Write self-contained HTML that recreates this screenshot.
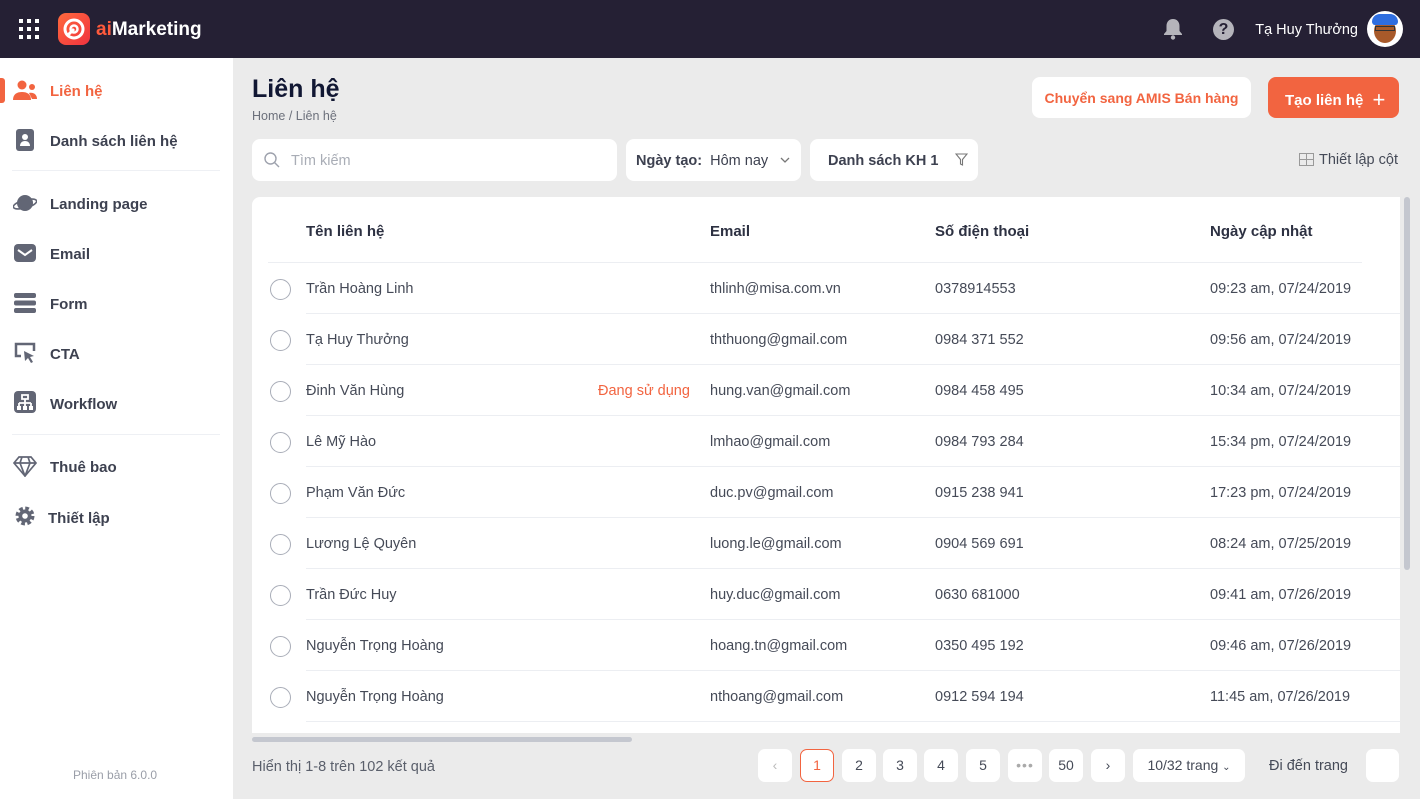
<!DOCTYPE html>
<html><head><meta charset="utf-8"><style>
*{box-sizing:border-box;margin:0;padding:0}
body{width:1420px;height:799px;overflow:hidden;background:#ebebeb;font-family:"Liberation Sans",sans-serif;color:#3a3f4b;position:relative}
.abs{position:absolute}
.hdr{left:0;top:0;width:1420px;height:58px;background:#252034}
.side{left:0;top:58px;width:233px;height:741px;background:#fff}
.nav{position:absolute;left:50px;font-size:15px;font-weight:bold;color:#3d4150}
.ic{position:absolute;left:13px;width:24px;height:22px}
.sep{position:absolute;left:12px;width:208px;height:1px;background:#eef0f4}
.btn{background:#fff;border-radius:8px}
.t{position:absolute;font-size:14.5px;color:#454a57;white-space:nowrap}
.th{position:absolute;top:223px;font-size:15px;font-weight:bold;color:#2d3142}
.rl{position:absolute;left:306px;width:1094px;height:1px;background:#eceef2}
.rad{position:absolute;left:270px;width:21px;height:21px;border:1.5px solid #a9adb8;border-radius:50%}
.pg{position:absolute;top:749px;width:34px;height:33px;background:#fff;border-radius:7px;font-size:14px;color:#454a57;text-align:center;line-height:33px}
</style></head><body>
<div class="abs hdr">
 <svg class="abs" style="left:19px;top:19px" width="20" height="20" viewBox="0 0 20 20" fill="#fff">
  <rect x="0" y="0" width="4" height="4"/><rect x="8" y="0" width="4" height="4"/><rect x="16" y="0" width="4" height="4"/>
  <rect x="0" y="8" width="4" height="4"/><rect x="8" y="8" width="4" height="4"/><rect x="16" y="8" width="4" height="4"/>
  <rect x="0" y="16" width="4" height="4"/><rect x="8" y="16" width="4" height="4"/><rect x="16" y="16" width="4" height="4"/></svg>
 <div class="abs" style="left:58px;top:13px;width:32px;height:32px;border-radius:8px;background:linear-gradient(135deg,#ff6a3d,#f0323f)">
  <svg width="32" height="32" viewBox="0 0 32 32"><circle cx="16" cy="16" r="9" fill="none" stroke="#fff" stroke-width="3"/><circle cx="16" cy="16" r="3.5" fill="none" stroke="#fff" stroke-width="2.5"/><path d="M9 23 L16 16" stroke="#fff" stroke-width="3"/></svg></div>
 <div class="abs" style="left:96px;top:19px;font-size:19px;font-weight:bold;color:#fff"><span style="color:#ff5a3c">ai</span>Marketing</div>
 <svg class="abs" style="left:1163px;top:18px" width="20" height="22" viewBox="0 0 20 22"><path d="M10 1c-4 0-6.5 3-6.5 7v5L1 16v1h18v-1l-2.5-3V8c0-4-2.5-7-6.5-7z" fill="#b5b4bb"/><circle cx="10" cy="19.5" r="2.2" fill="#b5b4bb"/></svg>
 <div class="abs" style="left:1213px;top:19px;width:21px;height:21px;border-radius:50%;background:#b5b4bb;color:#252034;font-weight:bold;font-size:16px;text-align:center;line-height:21px">?</div>
 <div class="abs" style="right:62px;top:22px;font-size:14.5px;color:#fff;white-space:nowrap">Tạ Huy Thưởng</div>
 <div class="abs" style="left:1367px;top:11px;width:36px;height:36px;border-radius:50%;background:#fff;overflow:hidden">
  <div class="abs" style="left:7px;top:8px;width:22px;height:24px;border-radius:50%;background:#a85a2a"></div>
  <div class="abs" style="left:5px;top:3px;width:26px;height:11px;border-radius:10px 10px 4px 4px;background:#2f6ee0"></div>
  <div class="abs" style="left:8px;top:15px;width:20px;height:5px;border:1.5px solid #333"></div></div>
</div>
<div class="abs side">
 <div class="abs" style="left:0;top:20px;width:5px;height:25px;background:#f26440;border-radius:0 3px 3px 0"></div>
 <svg class="ic" style="top:22px" viewBox="0 0 24 22" fill="#f26440"><circle cx="9" cy="5" r="4.5"/><path d="M0 20c0-6 4-8 9-8s9 2 9 8z"/><circle cx="19" cy="7" r="3"/><path d="M16 13c5-1 8 2 8 6h-5z"/></svg>
 <div class="nav" style="top:25px;color:#f26440">Liên hệ</div>
 <svg class="ic" style="top:71px" viewBox="0 0 24 22"><rect x="3" y="0" width="18" height="22" rx="3" fill="#626675"/><circle cx="12" cy="8" r="3" fill="#fff"/><path d="M7 17c0-3 2-5 5-5s5 2 5 5z" fill="#fff"/></svg>
 <div class="nav" style="top:75px">Danh sách liên hệ</div>
 <div class="sep" style="top:112px"></div>
 <svg class="ic" style="top:134px" viewBox="0 0 24 22"><circle cx="12" cy="11" r="8" fill="#626675"/><ellipse cx="12" cy="12" rx="12" ry="4" fill="none" stroke="#626675" stroke-width="1.6" transform="rotate(-15 12 12)"/></svg>
 <div class="nav" style="top:138px">Landing page</div>
 <svg class="ic" style="top:184px" viewBox="0 0 24 22"><rect x="1" y="2" width="22" height="18" rx="4" fill="#626675"/><path d="M5 8l7 5 7-5" fill="none" stroke="#fff" stroke-width="2"/></svg>
 <div class="nav" style="top:188px">Email</div>
 <svg class="ic" style="top:234px" viewBox="0 0 24 22" fill="#626675"><rect x="1" y="1" width="22" height="5" rx="2"/><rect x="1" y="8.5" width="22" height="5" rx="2"/><rect x="1" y="16" width="22" height="5" rx="2"/></svg>
 <div class="nav" style="top:238px">Form</div>
 <svg class="ic" style="top:284px" viewBox="0 0 24 22"><path d="M8 14H3V2h18v7" fill="none" stroke="#626675" stroke-width="2.5"/><path d="M11 9l10 5-4 1 3 5-2 1-3-5-3 3z" fill="#626675"/></svg>
 <div class="nav" style="top:288px">CTA</div>
 <svg class="ic" style="top:333px" viewBox="0 0 24 22"><rect x="1" y="0" width="22" height="22" rx="4" fill="#626675"/><path d="M9 4h6v4H9zM12 8v4M6 12h12M6 12v3M12 12v3M18 12v3" stroke="#fff" stroke-width="1.8" fill="none"/><rect x="4" y="15" width="4" height="4" fill="#fff"/><rect x="10" y="15" width="4" height="4" fill="#fff"/><rect x="16" y="15" width="4" height="4" fill="#fff"/></svg>
 <div class="nav" style="top:338px">Workflow</div>
 <div class="sep" style="top:376px"></div>
 <svg class="ic" style="top:397px" viewBox="0 0 24 22"><path d="M6 2h12l5 6-11 13L1 8z M1 8h22 M9 2l-2 6 5 13 5-13-2-6" fill="none" stroke="#626675" stroke-width="1.7"/></svg>
 <div class="nav" style="top:401px">Thuê bao</div>
 <svg class="ic" style="top:447px" viewBox="0 0 24 22"><circle cx="12" cy="11" r="7" fill="none" stroke="#626675" stroke-width="5" stroke-dasharray="3.3 2.2"/><circle cx="12" cy="11" r="6.5" fill="#626675"/><circle cx="12" cy="11" r="2.8" fill="#fff"/></svg>
 <div class="nav" style="top:452px;left:48px">Thiết lập</div>
 <div class="abs" style="left:73px;top:710px;font-size:12px;color:#9a9ea8">Phiên bản 6.0.0</div>
</div>

<div class="abs" style="left:252px;top:75px;font-size:25px;font-weight:bold;color:#111733">Liên hệ</div>
<div class="abs" style="left:252px;top:109px;font-size:12.5px;color:#6c707b">Home / Liên hệ</div>
<div class="abs btn" style="left:1032px;top:77px;width:219px;height:41px;font-size:14px;font-weight:bold;color:#f26440;text-align:center;line-height:42px;white-space:nowrap">Chuyển sang AMIS Bán hàng</div>
<div class="abs" style="left:1268px;top:77px;width:131px;height:41px;border-radius:8px;background:#f26440;color:#fff;font-size:15px;font-weight:bold;line-height:42px;padding-left:17px;white-space:nowrap">Tạo liên hệ <span style="font-size:22px;font-weight:normal;position:relative;top:2px;margin-left:5px">+</span></div>

<div class="abs btn" style="left:252px;top:139px;width:365px;height:42px"></div>
<svg class="abs" style="left:264px;top:152px" width="16" height="16" viewBox="0 0 16 16"><circle cx="6.5" cy="6.5" r="5.5" fill="none" stroke="#9ea2ad" stroke-width="1.4"/><path d="M10.5 10.5L15 15" stroke="#9ea2ad" stroke-width="1.4"/></svg>
<div class="abs" style="left:291px;top:153px;font-size:14.5px;color:#a9adb6">Tìm kiếm</div>
<div class="abs btn" style="left:626px;top:139px;width:175px;height:42px"></div>
<div class="abs" style="left:636px;top:153px;font-size:14.5px;color:#3d4150;white-space:nowrap"><b>Ngày tạo:</b>&nbsp; Hôm nay</div>
<svg class="abs" style="left:780px;top:157px" width="10" height="7" viewBox="0 0 10 7"><path d="M1 1l4 4 4-4" fill="none" stroke="#777" stroke-width="1.3"/></svg>
<div class="abs btn" style="left:810px;top:139px;width:168px;height:42px"></div>
<div class="abs" style="left:828px;top:153px;font-size:14.5px;font-weight:bold;color:#3d4150">Danh sách KH 1</div>
<svg class="abs" style="left:955px;top:153px" width="13" height="13" viewBox="0 0 13 13"><path d="M1 1h11L7.5 6.5V12L5.5 11V6.5z" fill="none" stroke="#777" stroke-width="1.1"/></svg>
<svg class="abs" style="left:1299px;top:153px" width="15" height="13" viewBox="0 0 15 13"><rect x=".5" y=".5" width="14" height="12" fill="none" stroke="#999"/><path d="M.5 6.5h14M7.5 .5v12" stroke="#999"/></svg>
<div class="abs" style="left:1319px;top:152px;font-size:14.5px;color:#454a57">Thiết lập cột</div>

<div class="abs" style="left:252px;top:197px;width:1148px;height:536px;background:#fff;border-radius:8px 0 0 0"></div>
<div class="abs" style="left:1404px;top:197px;width:6px;height:373px;background:#c4c7cf;border-radius:3px"></div>
<div class="abs" style="left:252px;top:737px;width:380px;height:5px;background:#c4c7cf;border-radius:3px"></div>
<div class="th" style="left:306px">Tên liên hệ</div>
<div class="th" style="left:710px">Email</div>
<div class="th" style="left:935px">Số điện thoại</div>
<div class="th" style="left:1210px">Ngày cập nhật</div>
<div class="abs" style="left:268px;top:262px;width:1094px;height:1px;background:#eceef2"></div>

<div class="rad" style="top:279px"></div><div class="t" style="left:306px;top:281px">Trần Hoàng Linh</div><div class="t" style="left:710px;top:281px">thlinh@misa.com.vn</div><div class="t" style="left:935px;top:281px">0378914553</div><div class="t" style="left:1210px;top:281px">09:23 am, 07/24/2019</div><div class="rl" style="top:313px"></div>
<div class="rad" style="top:330px"></div><div class="t" style="left:306px;top:332px">Tạ Huy Thưởng</div><div class="t" style="left:710px;top:332px">ththuong@gmail.com</div><div class="t" style="left:935px;top:332px">0984 371 552</div><div class="t" style="left:1210px;top:332px">09:56 am, 07/24/2019</div><div class="rl" style="top:364px"></div>
<div class="rad" style="top:381px"></div><div class="t" style="left:306px;top:383px">Đinh Văn Hùng</div><div class="t" style="left:598px;top:383px;color:#f26440">Đang sử dụng</div><div class="t" style="left:710px;top:383px">hung.van@gmail.com</div><div class="t" style="left:935px;top:383px">0984 458 495</div><div class="t" style="left:1210px;top:383px">10:34 am, 07/24/2019</div><div class="rl" style="top:415px"></div>
<div class="rad" style="top:432px"></div><div class="t" style="left:306px;top:434px">Lê Mỹ Hào</div><div class="t" style="left:710px;top:434px">lmhao@gmail.com</div><div class="t" style="left:935px;top:434px">0984 793 284</div><div class="t" style="left:1210px;top:434px">15:34 pm, 07/24/2019</div><div class="rl" style="top:466px"></div>
<div class="rad" style="top:483px"></div><div class="t" style="left:306px;top:485px">Phạm Văn Đức</div><div class="t" style="left:710px;top:485px">duc.pv@gmail.com</div><div class="t" style="left:935px;top:485px">0915 238 941</div><div class="t" style="left:1210px;top:485px">17:23 pm, 07/24/2019</div><div class="rl" style="top:517px"></div>
<div class="rad" style="top:534px"></div><div class="t" style="left:306px;top:536px">Lương Lệ Quyên</div><div class="t" style="left:710px;top:536px">luong.le@gmail.com</div><div class="t" style="left:935px;top:536px">0904 569 691</div><div class="t" style="left:1210px;top:536px">08:24 am, 07/25/2019</div><div class="rl" style="top:568px"></div>
<div class="rad" style="top:585px"></div><div class="t" style="left:306px;top:587px">Trần Đức Huy</div><div class="t" style="left:710px;top:587px">huy.duc@gmail.com</div><div class="t" style="left:935px;top:587px">0630 681000</div><div class="t" style="left:1210px;top:587px">09:41 am, 07/26/2019</div><div class="rl" style="top:619px"></div>
<div class="rad" style="top:636px"></div><div class="t" style="left:306px;top:638px">Nguyễn Trọng Hoàng</div><div class="t" style="left:710px;top:638px">hoang.tn@gmail.com</div><div class="t" style="left:935px;top:638px">0350 495 192</div><div class="t" style="left:1210px;top:638px">09:46 am, 07/26/2019</div><div class="rl" style="top:670px"></div>
<div class="rad" style="top:687px"></div><div class="t" style="left:306px;top:689px">Nguyễn Trọng Hoàng</div><div class="t" style="left:710px;top:689px">nthoang@gmail.com</div><div class="t" style="left:935px;top:689px">0912 594 194</div><div class="t" style="left:1210px;top:689px">11:45 am, 07/26/2019</div><div class="rl" style="top:721px"></div>

<div class="abs" style="left:252px;top:759px;font-size:14.5px;color:#5a5f6b">Hiển thị 1-8 trên 102 kết quả</div>
<div class="pg" style="left:758px;color:#bbb">‹</div>
<div class="pg" style="left:800px;border:1.5px solid #f26440;color:#f26440;line-height:30px">1</div>
<div class="pg" style="left:842px">2</div>
<div class="pg" style="left:883px">3</div>
<div class="pg" style="left:924px">4</div>
<div class="pg" style="left:966px">5</div>
<div class="pg" style="left:1008px;color:#aaa;letter-spacing:1px">•••</div>
<div class="pg" style="left:1049px">50</div>
<div class="pg" style="left:1091px">›</div>
<div class="pg" style="left:1133px;width:112px">10/32 trang <span style="font-size:10px">⌄</span></div>
<div class="abs" style="left:1269px;top:758px;font-size:14.5px;color:#454a57">Đi đến trang</div>
<div class="pg" style="left:1366px;width:33px"></div>
</body></html>
